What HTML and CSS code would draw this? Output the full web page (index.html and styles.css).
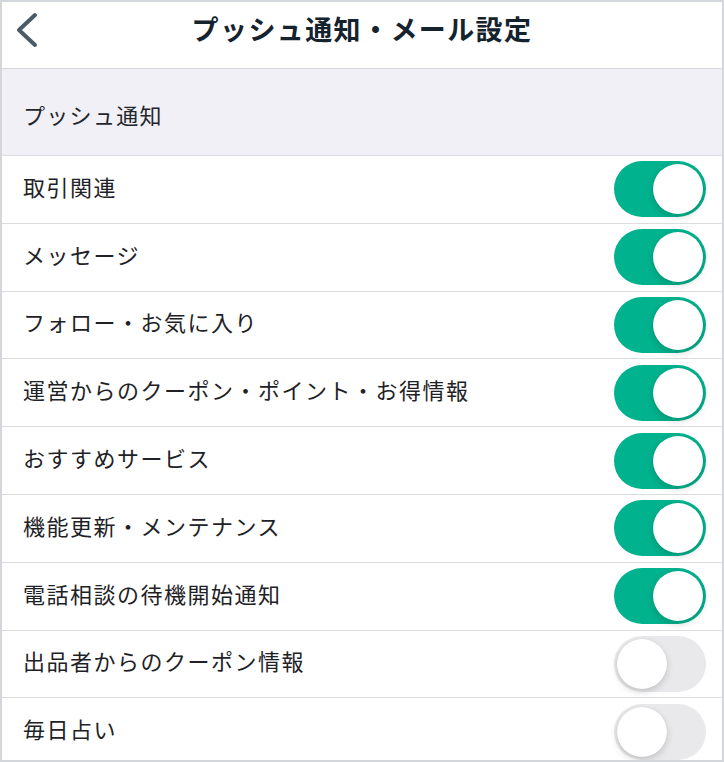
FILE: index.html
```html
<!DOCTYPE html>
<html lang="ja">
<head>
<meta charset="utf-8">
<title>プッシュ通知・メール設定</title>
<link rel="stylesheet" href="styles.css">
</head>
<body>
<div class="page">
  <header class="nav">
    <svg class="back" width="30" height="40" viewBox="0 0 30 40" aria-hidden="true">
      <polyline points="21,5 5,20 21,35" fill="none" stroke="#4a5b67" stroke-width="4" stroke-linecap="round" stroke-linejoin="round"/>
    </svg>
    <h1 class="title">プッシュ通知・メール設定</h1>
  </header>
  <div class="section">プッシュ通知</div>
  <ul class="list">
    <li class="row"><span class="label">取引関連</span><span class="toggle on"><span class="knob"></span></span></li>
    <li class="row"><span class="label">メッセージ</span><span class="toggle on"><span class="knob"></span></span></li>
    <li class="row"><span class="label">フォロー・お気に入り</span><span class="toggle on"><span class="knob"></span></span></li>
    <li class="row"><span class="label">運営からのクーポン・ポイント・お得情報</span><span class="toggle on"><span class="knob"></span></span></li>
    <li class="row"><span class="label">おすすめサービス</span><span class="toggle on"><span class="knob"></span></span></li>
    <li class="row"><span class="label">機能更新・メンテナンス</span><span class="toggle on"><span class="knob"></span></span></li>
    <li class="row"><span class="label">電話相談の待機開始通知</span><span class="toggle on"><span class="knob"></span></span></li>
    <li class="row"><span class="label">出品者からのクーポン情報</span><span class="toggle off"><span class="knob"></span></span></li>
    <li class="row"><span class="label">毎日占い</span><span class="toggle off"><span class="knob"></span></span></li>
  </ul>
</div>
</body>
</html>
```

FILE: styles.css
```css
* { box-sizing: border-box; }
html, body { margin: 0; padding: 0; background: #fff; }
body {
  font-family: "Noto Sans CJK JP", "Noto Sans", sans-serif;
  color: #1e2226;
}
.page {
  width: 724px;
  height: 762px;
  border: 2px solid #d3d6da;
  overflow: hidden;
  background: #fff;
}
.nav {
  position: relative;
  height: 67px;
  border-bottom: 1px solid #d6d6da;
  display: flex;
  align-items: center;
  justify-content: center;
}
.back {
  position: absolute;
  left: 12px;
  top: 8px;
}
.title {
  margin: 0;
  font-size: 27px;
  font-weight: 700;
  letter-spacing: 1.4px;
  color: #14232e;
  padding-bottom: 14px;
}
.section {
  height: 87px;
  background: #f1f0f7;
  border-bottom: 1px solid #dcdce0;
  padding: 4px 21px 0;
  display: flex;
  align-items: center;
  font-size: 22px;
  letter-spacing: 1.3px;
  color: #23272b;
}
.list {
  list-style: none;
  margin: 0;
  padding: 0;
}
.row {
  height: 67.8px;
  border-bottom: 1px solid #dcdce0;
  display: flex;
  align-items: center;
  justify-content: space-between;
  padding: 0 16px 0 21px;
}
.label {
  font-size: 22px;
  letter-spacing: 1.5px;
  color: #1e2226;
  padding-bottom: 7px;
}
.toggle {
  position: relative;
  width: 92px;
  height: 56px;
  border-radius: 28px;
  flex: none;
}
.toggle.on { background: #00b28d; }
.toggle.off { background: #e9e9eb; }
.knob {
  position: absolute;
  top: 3px;
  width: 50px;
  height: 50px;
  border-radius: 50%;
  background: #fff;
  box-shadow: 0 3px 7px rgba(0, 0, 0, 0.16), 0 0 1px rgba(0, 0, 0, 0.12);
}
.toggle.on .knob { right: 3px; }
.toggle.off .knob { left: 3px; }
```
